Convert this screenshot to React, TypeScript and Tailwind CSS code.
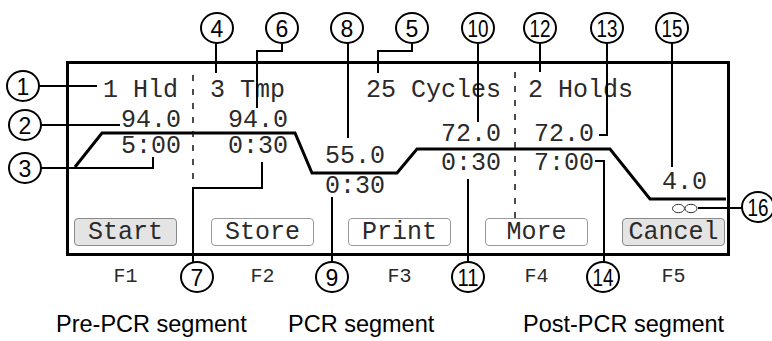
import React from 'react';

const circles: { n: string; x: number; y: number }[] = [
  { n: '1', x: 23, y: 86 },
  { n: '2', x: 25, y: 125 },
  { n: '3', x: 25, y: 168 },
  { n: '4', x: 217, y: 28 },
  { n: '6', x: 282, y: 28 },
  { n: '8', x: 347, y: 28 },
  { n: '5', x: 412, y: 28 },
  { n: '10', x: 478, y: 28 },
  { n: '12', x: 540, y: 28 },
  { n: '13', x: 607, y: 28 },
  { n: '15', x: 672, y: 28 },
  { n: '16', x: 758, y: 207 },
  { n: '7', x: 197, y: 277 },
  { n: '9', x: 332, y: 277 },
  { n: '11', x: 468, y: 277 },
  { n: '14', x: 603, y: 277 },
];

const leaders = [
  'M39 86 H97',
  'M41 125 H120',
  'M41 168 H153 V157',
  'M216 43 V73',
  'M282 43 V51 H257 V108',
  'M348 43 V138',
  'M412 43 V51 H378 V73',
  'M478 43 V122',
  'M540 43 V72',
  'M607 43 V135 H599',
  'M672 43 V167',
  'M698 208 H742',
  'M193 262 V188 H262 V162',
  'M332 262 V197',
  'M468 262 V179',
  'M604 262 V161 H595',
];

function Callouts() {
  return (
    <svg className="absolute inset-0 pointer-events-none" width={772} height={341} viewBox="0 0 772 341">
      {/* temperature profile */}
      <path
        d="M75 167 L102 133 L295 133 L312 173 L397 173 L417 149 L610 149 L650 199 L726 199"
        fill="none"
        stroke="#000"
        strokeWidth={3}
      />
      {/* segment dividers */}
      <path d="M193 75 V185 M515 72 V222" stroke="#111" strokeWidth={1.5} strokeDasharray="6 8" />
      {/* infinity */}
      <ellipse cx={678.5} cy={208.5} rx={6} ry={4.2} fill="none" stroke="#333" strokeWidth={1} />
      <ellipse cx={691} cy={208.5} rx={6} ry={4.2} fill="none" stroke="#333" strokeWidth={1} />
      {leaders.map((d) => (
        <path key={d} d={d} fill="none" stroke="#000" strokeWidth={2} />
      ))}
      {circles.map((c) => (
        <g key={c.n}>
          <ellipse cx={c.x} cy={c.y} rx={16} ry={15} fill="#fff" stroke="#000" strokeWidth={2} />
          <text
            x={c.x}
            y={c.y + 8.5}
            textAnchor="middle"
            fontFamily="Liberation Sans, Arial, sans-serif"
            fontSize={23}
            fill="#000"
            {...(c.n.length > 1 ? { textLength: 21, lengthAdjust: 'spacingAndGlyphs' } : {})}
          >
            {c.n}
          </text>
        </g>
      ))}
    </svg>
  );
}

function Key({ label, grey }: { label: string; grey?: boolean }) {
  return (
    <div
      className={`w-[103px] h-[28px] rounded-[4px] border flex items-center justify-center text-[25px] leading-none text-[#2a2a2a] ${
        grey ? 'bg-[#e4e4e4] border-[#8a8a8a]' : 'bg-white border-[#9a9a9a]'
      }`}
    >
      {label}
    </div>
  );
}

function Step({ temp, time, gap }: { temp: string; time?: string; gap: string }) {
  return (
    <div className={`flex flex-col ${gap}`}>
      <span>{temp}</span>
      {time && <span>{time}</span>}
    </div>
  );
}

export default function App() {
  return (
    <div className="relative w-[772px] h-[341px] bg-white overflow-hidden font-['Liberation_Mono',monospace]">
      <div className="ml-[66px] mt-[61px] w-[664px] h-[195px] border-[3px] border-black flex flex-col">
        <div className="relative flex-1 text-[25px] leading-none text-[#2a2a2a] whitespace-pre">
          <div className="flex pl-[34px] pt-[14px]">
            <span className="w-[107px]">1 Hld</span>
            <span className="w-[156px]">3 Tmp</span>
            <span className="w-[162px]">25 Cycles</span>
            <span>2 Holds</span>
          </div>
          <div className="absolute left-[52px] top-[44px]">
            <Step temp="94.0" time="5:00" gap="gap-[1px]" />
          </div>
          <div className="absolute left-[159px] top-[44px]">
            <Step temp="94.0" time="0:30" gap="gap-[1px]" />
          </div>
          <div className="absolute left-[256px] top-[80px]">
            <Step temp="55.0" time="0:30" gap="gap-[5px]" />
          </div>
          <div className="absolute left-[372px] top-[58px]">
            <Step temp="72.0" time="0:30" gap="gap-[4px]" />
          </div>
          <div className="absolute left-[465px] top-[58px]">
            <Step temp="72.0" time="7:00" gap="gap-[4px]" />
          </div>
          <div className="absolute left-[593px] top-[106px]">
            <Step temp="4.0" gap="gap-0" />
          </div>
        </div>
        <div className="flex gap-[34px] pl-[5px] pb-[7px]">
          <Key label="Start" grey />
          <Key label="Store" />
          <Key label="Print" />
          <Key label="More" />
          <Key label="Cancel" grey />
        </div>
      </div>
      <div className="flex gap-[34px] ml-[74px] mt-[11px] text-[20px] leading-[20px] text-[#2a2a2a]">
        <div className="w-[103px] text-center">F1</div>
        <div className="w-[103px] text-center">F2</div>
        <div className="w-[103px] text-center">F3</div>
        <div className="w-[103px] text-center">F4</div>
        <div className="w-[103px] text-center">F5</div>
      </div>
      <div className="flex ml-[56px] mt-[26px] font-['Liberation_Sans',Arial,sans-serif] text-[23.5px] leading-[23px] text-black whitespace-nowrap">
        <div className="w-[232px]">Pre-PCR segment</div>
        <div className="w-[235px]">PCR segment</div>
        <div>Post-PCR segment</div>
      </div>
      <Callouts />
    </div>
  );
}
